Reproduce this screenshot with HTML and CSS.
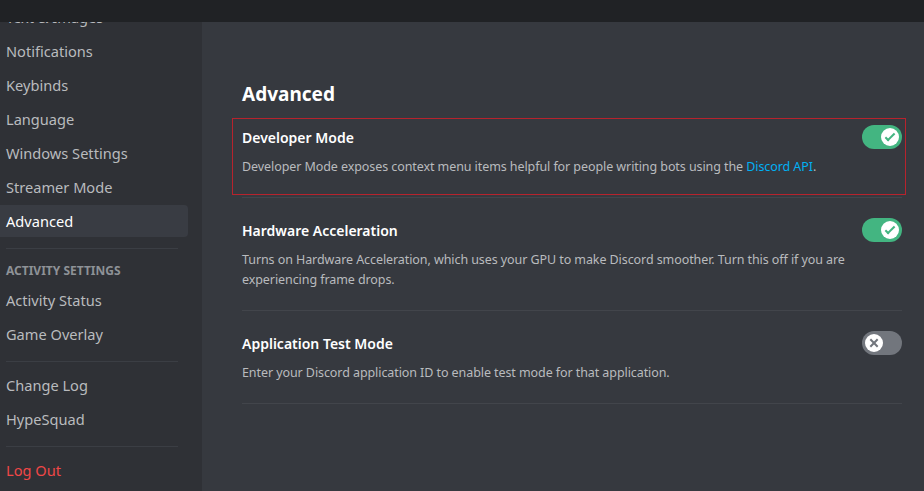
FILE: index.html
```html
<!DOCTYPE html>
<html lang="en">
<head>
<meta charset="utf-8">
<title>Settings - Advanced</title>
<link rel="stylesheet" href="styles.css">
</head>
<body>
<div class="app">
  <div class="topbar"></div>
  <div class="main">
    <nav class="sidebar">
      <div class="nav-list">
        <div class="nav-item">Text &amp; Images</div>
        <div class="nav-item">Notifications</div>
        <div class="nav-item">Keybinds</div>
        <div class="nav-item">Language</div>
        <div class="nav-item">Windows Settings</div>
        <div class="nav-item">Streamer Mode</div>
        <div class="nav-item selected">Advanced</div>
        <div class="nav-sep"></div>
        <div class="nav-header">Activity Settings</div>
        <div class="nav-item">Activity Status</div>
        <div class="nav-item">Game Overlay</div>
        <div class="nav-sep"></div>
        <div class="nav-item">Change Log</div>
        <div class="nav-item">HypeSquad</div>
        <div class="nav-sep"></div>
        <div class="nav-item logout">Log Out</div>
      </div>
    </nav>
    <main class="content">
      <h2 class="page-title">Advanced</h2>

      <section class="setting highlighted">
        <div class="setting-head">
          <div class="setting-title">Developer Mode</div>
          <div class="toggle on">
            <span class="knob">
              <svg viewBox="0 0 20 20" width="18" height="18"><path fill="#43b581" d="M7.89561 14.8538L6.30462 13.2629L14.3099 5.25755L15.9009 6.84854L7.89561 14.8538Z"/><path fill="#43b581" d="M4.08643 11.0903L5.67742 9.49929L9.4485 13.2704L7.85751 14.8614L4.08643 11.0903Z"/></svg>
            </span>
          </div>
        </div>
        <div class="setting-desc">Developer Mode exposes context menu items helpful for people writing bots using the <a class="link" href="#">Discord API</a>.</div>
        <div class="divider"></div>
      </section>

      <section class="setting">
        <div class="setting-head">
          <div class="setting-title">Hardware Acceleration</div>
          <div class="toggle on">
            <span class="knob">
              <svg viewBox="0 0 20 20" width="18" height="18"><path fill="#43b581" d="M7.89561 14.8538L6.30462 13.2629L14.3099 5.25755L15.9009 6.84854L7.89561 14.8538Z"/><path fill="#43b581" d="M4.08643 11.0903L5.67742 9.49929L9.4485 13.2704L7.85751 14.8614L4.08643 11.0903Z"/></svg>
            </span>
          </div>
        </div>
        <div class="setting-desc">Turns on Hardware Acceleration, which uses your GPU to make Discord smoother. Turn this off if you are experiencing frame drops.</div>
        <div class="divider"></div>
      </section>

      <section class="setting">
        <div class="setting-head">
          <div class="setting-title">Application Test Mode</div>
          <div class="toggle off">
            <span class="knob">
              <svg viewBox="0 0 20 20" width="18" height="18"><path fill="#72767d" d="M5.13231 6.72963L6.7233 5.13864L14.855 13.2704L13.264 14.8614L5.13231 6.72963Z"/><path fill="#72767d" d="M13.2704 5.13864L14.8614 6.72963L6.72963 14.8614L5.13864 13.2704L13.2704 5.13864Z"/></svg>
            </span>
          </div>
        </div>
        <div class="setting-desc">Enter your Discord application ID to enable test mode for that application.</div>
        <div class="divider"></div>
      </section>
    </main>
  </div>
</div>
</body>
</html>
```
FILE: styles.css
```css
* { box-sizing: border-box; }
html, body { margin: 0; padding: 0; }
body {
  background: #36393f;
  font-family: "Noto Sans", "Open Sans", sans-serif;
  width: 924px;
  height: 491px;
  overflow: hidden;
}
.app {
  display: flex;
  flex-direction: column;
  height: 491px;
}
.topbar {
  height: 22px;
  flex: none;
  background: #202225;
  position: relative;
  z-index: 2;
}
.main {
  flex: 1;
  display: flex;
  min-height: 0;
}
.sidebar {
  width: 202px;
  flex: none;
  background: #2f3136;
  overflow: hidden;
}
.nav-list {
  margin-top: -21px;
  display: flex;
  flex-direction: column;
}
.nav-item {
  width: 188px;
  height: 32px;
  margin-bottom: 2px;
  padding-left: 6px;
  display: flex;
  align-items: center;
  font-size: 14.6px;
  color: #b9bbbe;
  border-radius: 0 4px 4px 0;
  white-space: nowrap;
}
.nav-item.selected {
  background: #393c43;
  color: #ffffff;
}
.nav-item.logout { color: #f04747; }
.nav-sep {
  height: 1px;
  width: 172px;
  margin: 9px 0 7px 6px;
  background: #3b3e44;
}
.nav-header {
  padding: 7px 6px 5px 6px;
  line-height: 16px;
  font-size: 12px;
  font-weight: 700;
  text-transform: uppercase;
  color: #8e9297;
}
.content {
  flex: 1;
  padding: 60px 22px 0 40px;
}
.page-title {
  margin: 0 0 19px;
  font-size: 19px;
  line-height: 24px;
  font-weight: 700;
  color: #ffffff;
}
.setting {
  position: relative;
  margin-bottom: 20px;
}
.setting.highlighted::before {
  content: "";
  position: absolute;
  left: -10px;
  right: -4px;
  top: -7px;
  height: 75px;
  border: 1px solid #b7232d;
  pointer-events: none;
}
.setting-head {
  display: flex;
  align-items: center;
  justify-content: space-between;
  height: 24px;
}
.setting-title {
  font-size: 14px;
  font-weight: 600;
  color: #ffffff;
}
.setting-desc {
  margin-top: 8px;
  font-size: 12.5px;
  letter-spacing: -0.08px;
  line-height: 20px;
  color: #b9bbbe;
}
.link { color: #00b0f4; text-decoration: none; }
.divider {
  margin-top: 20px;
  height: 1px;
  background: #42454b;
}
.toggle {
  width: 40px;
  height: 24px;
  border-radius: 12px;
  padding: 3px;
  display: flex;
  flex: none;
}
.toggle.on { background: #43b581; justify-content: flex-end; }
.toggle.off { background: #72767d; justify-content: flex-start; }
.knob {
  width: 18px;
  height: 18px;
  border-radius: 50%;
  background: #ffffff;
  display: flex;
}
```
